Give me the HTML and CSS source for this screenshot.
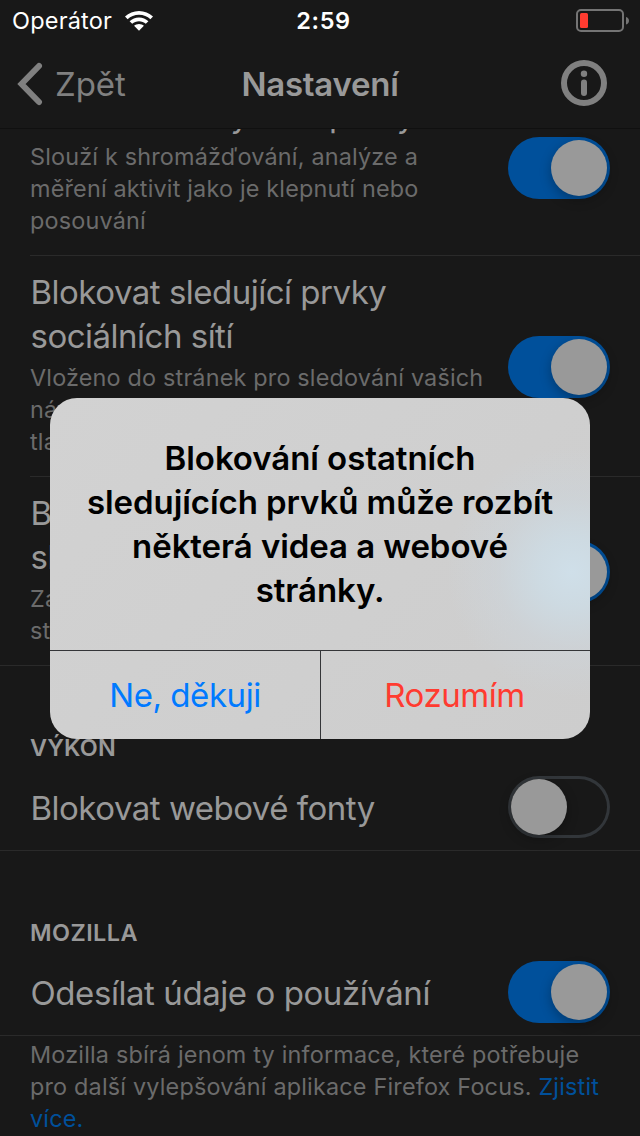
FILE: index.html
```html
<!DOCTYPE html>
<html lang="cs">
<head>
<meta charset="utf-8">
<title>Nastavení</title>
<link rel="stylesheet" href="styles.css">
</head>
<body>
<div class="screen">
  <header class="top">
    <div class="status">
      <div class="carrier"><span class="carrier-name">Operátor</span>
        <svg class="wifi" width="28" height="20" viewBox="0 0 28 20"><path d="M14 0C8.600 0 3.700 2.100 0 5.600L2.600 8.200C5.600 5.400 9.600 3.700 14 3.700S22.400 5.400 25.400 8.200L28 5.600C24.300 2.100 19.400 0 14 0Z"/><path d="M14 6.500C10.400 6.500 7.100 7.900 4.600 10.200L7.200 12.800C9 11.200 11.400 10.200 14 10.200S19 11.200 20.800 12.800L23.400 10.200C20.900 7.900 17.600 6.500 14 6.500Z"/><path d="M14 12.900C12.100 12.900 10.400 13.600 9.100 14.800L14 19.700L18.900 14.800C17.600 13.600 15.900 12.900 14 12.900Z"/></svg>
      </div>
      <div class="clock">2:59</div>
      <div class="power"><svg width="54" height="24" viewBox="0 0 54 24"><rect x="1" y="1" width="46" height="21" rx="4" fill="none" stroke="#747474" stroke-width="2"/><rect x="4" y="4" width="8" height="15" rx="1.500" fill="#ff3b30"/><path d="M50 8C52 8.600 53 10 53 11.700S52 14.800 50 15.500Z" fill="#747474"/></svg></div>
    </div>
    <nav class="nav">
      <div class="back"><svg width="26" height="44" viewBox="0 0 26 44"><path d="M22 4L4.500 22L22 40" fill="none" stroke="#808080" stroke-width="6" stroke-linecap="round" stroke-linejoin="miter"/></svg><span class="back-label">Zpět</span></div>
      <h1 class="title">Nastavení</h1>
      <div class="info"><svg width="46" height="46" viewBox="0 0 46 46"><circle cx="23" cy="23" r="20" fill="none" stroke="#808080" stroke-width="6"/><circle cx="23" cy="13.800" r="3.200" fill="#808080"/><rect x="20" y="19.500" width="6" height="16.500" rx="3" fill="#808080"/></svg></div>
    </nav>
  </header>

  <main class="list">
    <section class="row row-first">
      <div class="copy"><h2 class="label">Blokovat analytické prvky</h2><p class="desc">Slouží k shromážďování, analýze a<br>měření aktivit jako je klepnutí nebo<br>posouvání</p></div>
      <div class="switch on"><i class="knob"></i></div>
    </section>
    <section class="row">
      <div class="copy"><h2 class="label">Blokovat sledující prvky<br>sociálních sítí</h2><p class="desc">Vloženo do stránek pro sledování vašich<br>návštěv a zobrazení sdílecích<br>tlačítek</p></div>
      <div class="switch on"><i class="knob"></i></div>
    </section>
    <section class="row row-last">
      <div class="copy"><h2 class="label">Blokovat ostatní<br>sledující prvky</h2><p class="desc">Zapnutí může způsobit, že některé<br>stránky nebudou fungovat</p></div>
      <div class="switch on"><i class="knob"></i></div>
    </section>
    <h3 class="section section-perf">VÝKON</h3>
    <section class="row row-single row-last">
      <h2 class="label">Blokovat webové fonty</h2>
      <div class="switch"><i class="knob"></i></div>
    </section>
    <h3 class="section section-moz">MOZILLA</h3>
    <section class="row row-single row-last">
      <h2 class="label label-usage">Odesílat údaje o používání</h2>
      <div class="switch on"><i class="knob"></i></div>
    </section>
    <p class="desc footer">Mozilla sbírá jenom ty informace, které potřebuje<br>pro další vylepšování aplikace Firefox Focus. <a class="more">Zjistit<br>více.</a></p>
  </main>

  <div class="dialog" role="alertdialog">
    <p class="message">Blokování ostatních<br>sledujících prvků může rozbít<br>některá videa a webové<br>stránky.</p>
    <div class="actions"><button class="action cancel">Ne, děkuji</button><button class="action accept">Rozumím</button></div>
  </div>
</div>
</body>
</html>
```
FILE: styles.css
```css
* { box-sizing: border-box; margin: 0; padding: 0; }
body { background: #181818; font-family: Inter, "Liberation Sans", sans-serif; }
.screen { position: relative; width: 640px; height: 1136px; overflow: hidden; background: #181818; color: #999; display: flex; flex-direction: column; }
.top { position: relative; z-index: 1; flex: none; height: 129px; background: #181818; border-bottom: 1px solid #101010; }
.status { height: 41px; padding-top: 1px; display: grid; grid-template-columns: 1fr 120px 1fr; align-items: center; color: #fff; }
.carrier { display: flex; align-items: center; gap: 13px; padding-left: 12px; }
.carrier-name { font-size: 23.5px; line-height: 40px; letter-spacing: 0.2px; }
.wifi { fill: #fff; }
.clock { padding-left: 7px; text-align: center; font-size: 23.5px; font-weight: 600; letter-spacing: 0.6px; line-height: 40px; }
.power { display: flex; justify-content: flex-end; padding-right: 10px; }
.nav { height: 87px; padding-bottom: 1px; display: grid; grid-template-columns: 1fr 200px 1fr; align-items: center; }
.back { display: flex; align-items: center; gap: 12px; padding-left: 17px; color: #808080; }
.back-label { font-size: 33px; line-height: 44px; letter-spacing: -0.1px; }
.title { text-align: center; font-size: 33px; line-height: 44px; font-weight: 600; letter-spacing: -0.25px; }
.info { display: flex; justify-content: flex-end; padding: 0 33px 2px 0; }
.list { flex: none; margin-top: -50px; }
.row { display: flex; justify-content: space-between; align-items: center; margin-left: 30px; padding: 14px 30px 18px 0; border-bottom: 1px solid #2a2a2a; }
.row-last { margin-left: 0; padding-left: 30px; }
.copy { width: 470px; white-space: nowrap; }
.label { padding-left: 0.5px; font-size: 33px; line-height: 44px; font-weight: 400; letter-spacing: -0.5px; }
.row-first .label { letter-spacing: -0.58px; }
.desc { margin-top: 4px; color: #6b6b6b; font-size: 23.4px; line-height: 32px; letter-spacing: 0.18px; white-space: nowrap; }
.switch { flex: none; width: 102px; height: 62px; margin-top: 6px; padding: 3px; border-radius: 31px; background: #181818; box-shadow: inset 0 0 0 3px #32363a; display: flex; }
.switch.on { justify-content: flex-end; background: #00509b; box-shadow: none; }
.knob { width: 56px; height: 56px; border-radius: 50%; background: #999; box-shadow: 0 4px 12px rgba(0,0,0,.28); }
.row-single { height: 88px; padding-top: 0; padding-bottom: 0; }
.row-single .label { padding-top: 2px; }
.row-single .switch { margin-top: 0; }
.row-single .label-usage { letter-spacing: -0.43px; }
.section { padding-left: 30px; font-size: 23.4px; line-height: 32px; font-weight: 600; letter-spacing: 0.2px; }
.section-perf { margin: 66px 0 -1px; }
.section-moz { margin: 66px 0 -1px; letter-spacing: 0.45px; }
.footer { margin: 3px 0 0 30px; letter-spacing: 0.19px; }
.more { color: #00509b; }
.dialog { position: absolute; z-index: 2; left: 50px; top: 398px; width: 540px; height: 341px; border-radius: 27px; overflow: hidden; color: #000; background: radial-gradient(circle 125px at 522px 174px, #cfdfe9 0%, rgba(205,220,229,.85) 28%, rgba(205,215,223,.45) 60%, rgba(206,208,210,0) 100%), linear-gradient(135deg, #d2d2d2, #cdcdcd); }
.message { height: 252px; padding-top: 38px; text-align: center; font-size: 33px; line-height: 44px; font-weight: 600; letter-spacing: -0.07px; white-space: nowrap; }
.actions { display: grid; grid-template-columns: 1fr 1fr; height: 89px; border-top: 1px solid #343538; }
.action { border: 0; background: none; font: 400 33px/44px Inter, "Liberation Sans", sans-serif; letter-spacing: -0.45px; }
.cancel { color: #007aff; }
.accept { padding-right: 2px; color: #ff3b30; border-left: 1px solid #343538; }
```
